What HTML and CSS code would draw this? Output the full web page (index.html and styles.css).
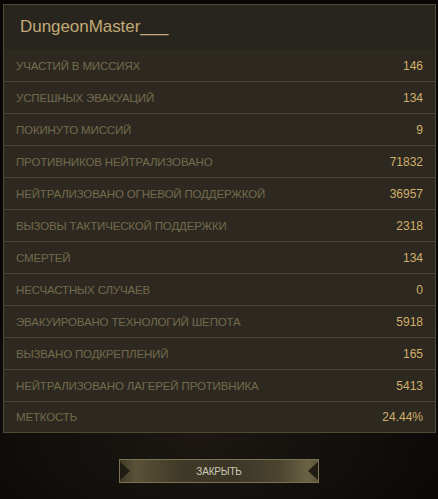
FILE: index.html
```html
<!DOCTYPE html>
<html lang="ru">
<head>
<meta charset="utf-8">
<link rel="stylesheet" href="styles.css">
</head>
<body>
<div class="page">
  <div class="panel">
    <div class="title">DungeonMaster___</div>
    <div class="row"><span class="label">Участий в миссиях</span><span class="value">146</span></div>
    <div class="row"><span class="label">Успешных эвакуаций</span><span class="value">134</span></div>
    <div class="row"><span class="label">Покинуто миссий</span><span class="value">9</span></div>
    <div class="row"><span class="label">Противников нейтрализовано</span><span class="value">71832</span></div>
    <div class="row"><span class="label">Нейтрализовано огневой поддержкой</span><span class="value">36957</span></div>
    <div class="row"><span class="label">Вызовы тактической поддержки</span><span class="value">2318</span></div>
    <div class="row"><span class="label">Смертей</span><span class="value">134</span></div>
    <div class="row"><span class="label">Несчастных случаев</span><span class="value">0</span></div>
    <div class="row"><span class="label">Эвакуировано технологий шепота</span><span class="value">5918</span></div>
    <div class="row"><span class="label">Вызвано подкреплений</span><span class="value">165</span></div>
    <div class="row"><span class="label">Нейтрализовано лагерей противника</span><span class="value">5413</span></div>
    <div class="row last"><span class="label">Меткость</span><span class="value">24.44%</span></div>
  </div>
  <div class="actions">
    <button class="close-btn"><span class="tri tri-left"></span>Закрыть<span class="tri tri-right"></span></button>
  </div>
</div>
</body>
</html>
```
FILE: styles.css
```css
* { box-sizing: border-box; }
html, body { margin: 0; padding: 0; }
body {
  width: 438px;
  height: 499px;
  overflow: hidden;
  background: radial-gradient(ellipse 320px 160px at 200px 440px, #1c1712 0%, #0d0b09 70%, #070605 100%);
  font-family: "Liberation Sans", Arial, sans-serif;
}
.page {
  padding: 4px 2px 0 3px;
}
.panel {
  border: 1px solid #4f4936;
  background: #2c2820;
}
.title {
  height: 45px;
  background: #28241e;
  color: #c2ab76;
  font-size: 17px;
  padding: 12px 0 0 16px;
  letter-spacing: -0.05px;
}
.row {
  height: 32px;
  display: flex;
  align-items: center;
  justify-content: space-between;
  padding: 0 12px 0 12px;
  border-bottom: 1px solid #4a4533;
  background: #2d2921;
}
.row.last { border-bottom: none; height: 30px; }
.label {
  color: #746a4c;
  font-size: 11.5px;
  text-transform: uppercase;
  letter-spacing: -0.15px;
}
.value {
  color: #d2af6a;
  font-size: 12px;
}
.actions {
  display: flex;
  justify-content: center;
  padding-top: 26px;
  padding-right: 1px;
}
.close-btn {
  position: relative;
  width: 200px;
  height: 24px;
  border: 1px solid #7c7150;
  background: linear-gradient(to right, #403a27 0%, #5a5238 8%, #403a28 30%, #3a3525 55%, #4a4430 80%, #6b6244 95%, #5d553a 100%);
  color: #cfcab8;
  font-family: "Liberation Sans", Arial, sans-serif;
  font-size: 10px;
  text-transform: uppercase;
  padding: 0;
  letter-spacing: -0.2px;
}
.tri {
  position: absolute;
  top: 2px;
  width: 0;
  height: 0;
  border-top: 9px solid transparent;
  border-bottom: 9px solid transparent;
}
.tri-left { left: 0; border-left: 10px solid #1f1c14; }
.tri-right { right: 0; border-right: 10px solid #1f1c14; }
```
